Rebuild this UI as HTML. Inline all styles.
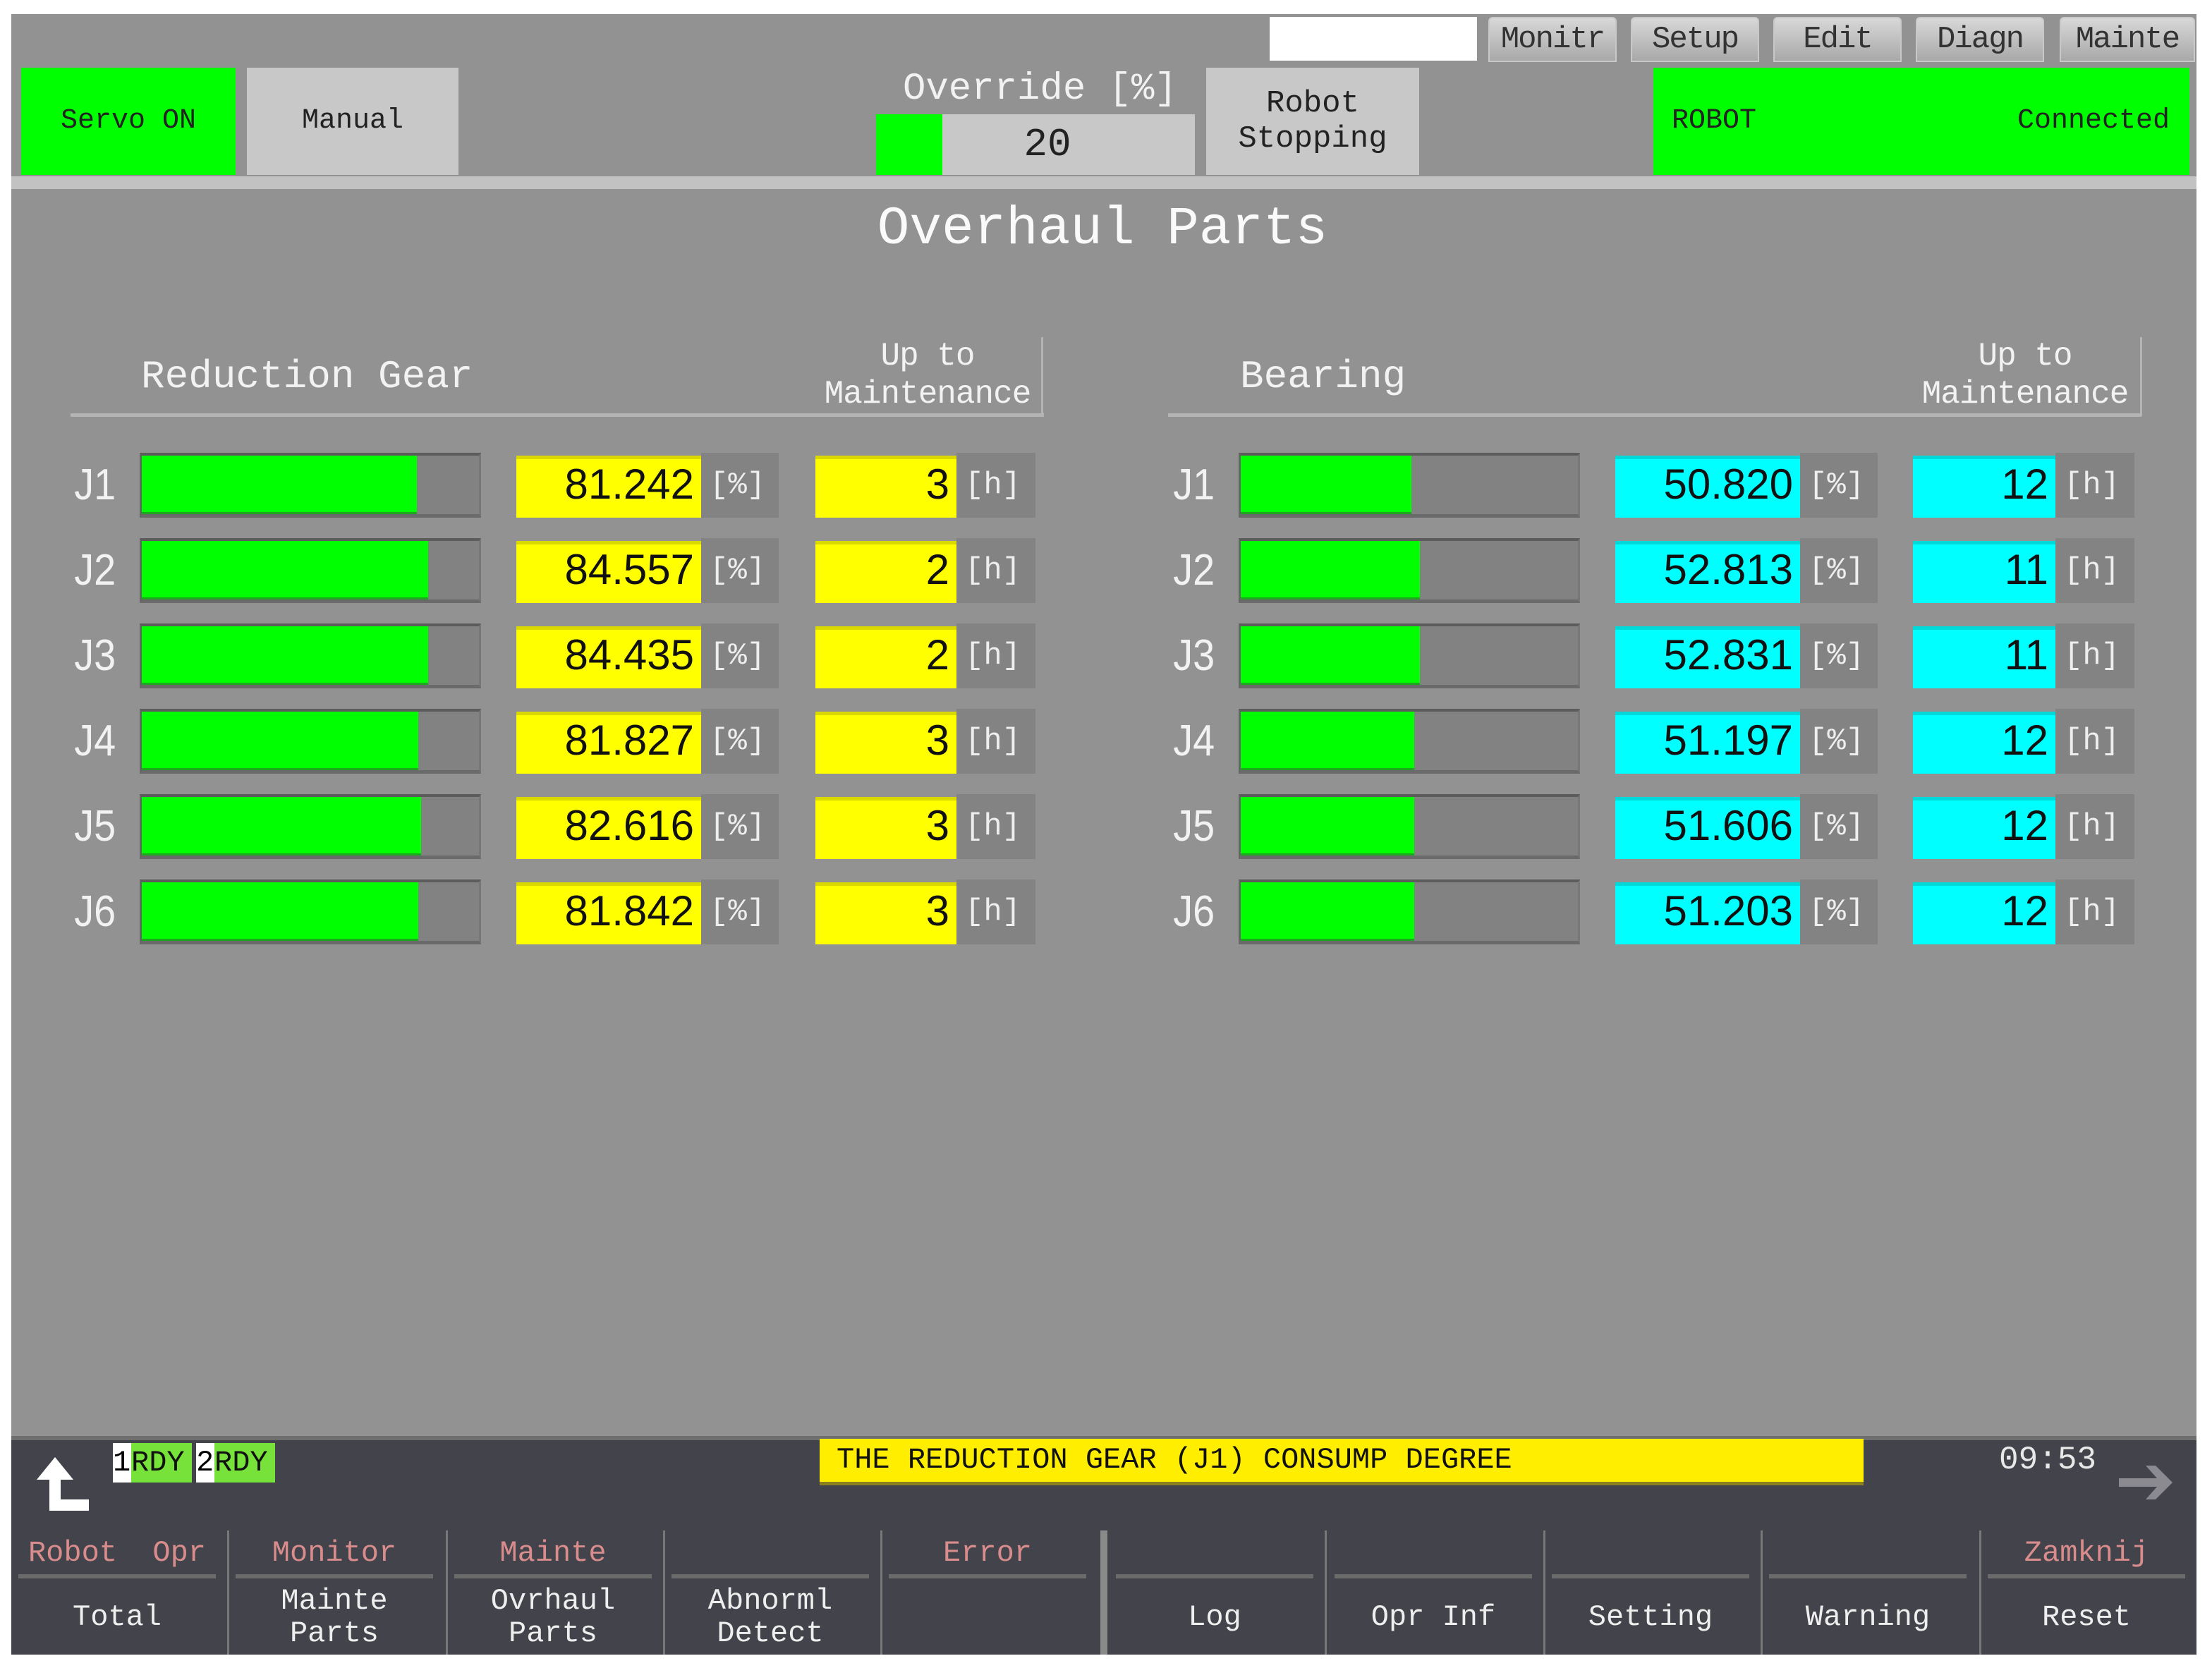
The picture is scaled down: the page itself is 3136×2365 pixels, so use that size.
<!DOCTYPE html>
<html><head><meta charset="utf-8"><style>
*{margin:0;padding:0;box-sizing:border-box}
body{width:3136px;height:2365px;background:#fff;position:relative;overflow:hidden;font-family:"Liberation Mono",monospace}
.a{position:absolute}
.scr{left:16px;top:20px;width:3098px;height:2326px;background:#929292}
.tab{top:24px;height:64px;background:linear-gradient(#d8d8d8,#a8a8a8);border:2px solid #c8c8c8;border-radius:6px 6px 0 0;color:#333;font-size:44px;text-align:center;line-height:60px;letter-spacing:-2px}
.btn{top:96px;height:152px;display:flex;align-items:center;justify-content:center;font-size:40px;color:#222;text-align:center;line-height:48px}
.row{position:absolute;left:0;width:3136px;height:92px}
.j{position:absolute;top:4px;font-family:"Liberation Sans",sans-serif;font-size:62px;color:#f2f2f2;line-height:84px;transform:scaleX(.9)}
.bar{position:absolute;top:0;width:484px;height:92px;background:#828282;border-top:4px solid #5c5c5c;border-bottom:5px solid #6a6a6a;border-left:3px solid #666;border-right:3px solid #777}
.bar i{position:absolute;left:0;top:0;bottom:0;background:#00ff00;border-bottom:3px solid #1ca81c}
.v{position:absolute;top:4px;height:88px;text-align:right;padding-right:10px;font-family:"Liberation Sans",sans-serif;font-size:60px;line-height:72px;color:#111;border-top:5px solid rgba(0,0,0,.15)}
.y{background:#ffff00}.c{background:#00ffff}
.u{position:absolute;top:0;height:92px;background:#838383;color:#eee;font-size:44px;line-height:92px;padding-left:12px}
.hd{color:#f2f2f2;font-size:56px}
.sm{color:#f2f2f2;font-size:46px;text-align:center;line-height:54px;letter-spacing:-1px}
.fk{position:absolute;top:2160px;height:186px;width:300px;text-align:center}
.fk .t{position:absolute;top:18px;width:100%;color:#d88c8c;font-size:42px}
.fk .l{position:absolute;top:72px;left:10px;right:10px;height:6px;background:#6a6a6a}
.fk .b{position:absolute;top:88px;width:100%;color:#eee;font-size:42px;line-height:46px;height:90px;display:flex;align-items:center;justify-content:center}
.sep{position:absolute;top:2170px;width:3px;height:176px;background:#777}
</style></head><body>
<div class="a scr"></div>
<div class="a" style="left:1800px;top:24px;width:294px;height:62px;background:#fff"></div>
<div class="a tab" style="left:2110px;width:182px">Monitr</div>
<div class="a tab" style="left:2312px;width:182px">Setup</div>
<div class="a tab" style="left:2514px;width:182px">Edit</div>
<div class="a tab" style="left:2716px;width:182px">Diagn</div>
<div class="a tab" style="left:2920px;width:192px">Mainte</div>

<div class="a btn" style="left:30px;width:304px;background:#00ff00">Servo ON</div>
<div class="a btn" style="left:350px;width:300px;background:#c8c8c8">Manual</div>
<div class="a" style="left:1280px;top:96px;color:#f2f2f2;font-size:54px">Override [%]</div>
<div class="a" style="left:1242px;top:162px;width:94px;height:86px;background:#00ff00"></div>
<div class="a btn" style="left:1336px;top:162px;width:358px;height:86px;background:#c8c8c8;font-size:56px;padding-right:60px">20</div>
<div class="a btn" style="left:1710px;width:302px;background:#c8c8c8;font-size:44px;line-height:50px">Robot<br>Stopping</div>
<div class="a btn" style="left:2344px;width:760px;background:#00ff00;justify-content:space-between;padding:0 28px 0 26px"><span>ROBOT</span><span>Connected</span></div>
<div class="a" style="left:16px;top:250px;width:3098px;height:18px;background:#c2c2c2"></div>

<div class="a" style="left:0;width:3136px;top:270px;text-align:center;color:#fafafa;font-size:76px;line-height:110px;padding-right:10px">Overhaul Parts</div>

<div class="a hd" style="left:200px;top:502px">Reduction Gear</div>
<div class="a sm" style="left:1150px;top:478px;width:330px">Up to<br>Maintenance</div>
<div class="a" style="left:100px;top:586px;width:1380px;height:5px;background:#b4b4b4"></div>
<div class="a" style="left:1476px;top:478px;width:3px;height:112px;background:#b4b4b4"></div>
<div class="a hd" style="left:1758px;top:502px">Bearing</div>
<div class="a sm" style="left:2706px;top:478px;width:330px">Up to<br>Maintenance</div>
<div class="a" style="left:1656px;top:586px;width:1380px;height:5px;background:#b4b4b4"></div>
<div class="a" style="left:3034px;top:478px;width:3px;height:112px;background:#b4b4b4"></div>

<div class="row" style="top:642px">
<div class="j" style="left:102px">J1</div><div class="bar" style="left:198px"><i style="width:390px"></i></div>
<div class="v y" style="left:732px;width:262px">81.242</div><div class="u" style="left:994px;width:110px">[%]</div>
<div class="v y" style="left:1156px;width:200px">3</div><div class="u" style="left:1356px;width:112px">[h]</div>
<div class="j" style="left:1660px">J1</div><div class="bar" style="left:1756px"><i style="width:242px"></i></div>
<div class="v c" style="left:2290px;width:262px">50.820</div><div class="u" style="left:2552px;width:110px">[%]</div>
<div class="v c" style="left:2712px;width:202px">12</div><div class="u" style="left:2914px;width:112px">[h]</div>
</div>
<div class="row" style="top:763px">
<div class="j" style="left:102px">J2</div><div class="bar" style="left:198px"><i style="width:406px"></i></div>
<div class="v y" style="left:732px;width:262px">84.557</div><div class="u" style="left:994px;width:110px">[%]</div>
<div class="v y" style="left:1156px;width:200px">2</div><div class="u" style="left:1356px;width:112px">[h]</div>
<div class="j" style="left:1660px">J2</div><div class="bar" style="left:1756px"><i style="width:254px"></i></div>
<div class="v c" style="left:2290px;width:262px">52.813</div><div class="u" style="left:2552px;width:110px">[%]</div>
<div class="v c" style="left:2712px;width:202px">11</div><div class="u" style="left:2914px;width:112px">[h]</div>
</div>
<div class="row" style="top:884px">
<div class="j" style="left:102px">J3</div><div class="bar" style="left:198px"><i style="width:406px"></i></div>
<div class="v y" style="left:732px;width:262px">84.435</div><div class="u" style="left:994px;width:110px">[%]</div>
<div class="v y" style="left:1156px;width:200px">2</div><div class="u" style="left:1356px;width:112px">[h]</div>
<div class="j" style="left:1660px">J3</div><div class="bar" style="left:1756px"><i style="width:254px"></i></div>
<div class="v c" style="left:2290px;width:262px">52.831</div><div class="u" style="left:2552px;width:110px">[%]</div>
<div class="v c" style="left:2712px;width:202px">11</div><div class="u" style="left:2914px;width:112px">[h]</div>
</div>
<div class="row" style="top:1005px">
<div class="j" style="left:102px">J4</div><div class="bar" style="left:198px"><i style="width:392px"></i></div>
<div class="v y" style="left:732px;width:262px">81.827</div><div class="u" style="left:994px;width:110px">[%]</div>
<div class="v y" style="left:1156px;width:200px">3</div><div class="u" style="left:1356px;width:112px">[h]</div>
<div class="j" style="left:1660px">J4</div><div class="bar" style="left:1756px"><i style="width:246px"></i></div>
<div class="v c" style="left:2290px;width:262px">51.197</div><div class="u" style="left:2552px;width:110px">[%]</div>
<div class="v c" style="left:2712px;width:202px">12</div><div class="u" style="left:2914px;width:112px">[h]</div>
</div>
<div class="row" style="top:1126px">
<div class="j" style="left:102px">J5</div><div class="bar" style="left:198px"><i style="width:396px"></i></div>
<div class="v y" style="left:732px;width:262px">82.616</div><div class="u" style="left:994px;width:110px">[%]</div>
<div class="v y" style="left:1156px;width:200px">3</div><div class="u" style="left:1356px;width:112px">[h]</div>
<div class="j" style="left:1660px">J5</div><div class="bar" style="left:1756px"><i style="width:246px"></i></div>
<div class="v c" style="left:2290px;width:262px">51.606</div><div class="u" style="left:2552px;width:110px">[%]</div>
<div class="v c" style="left:2712px;width:202px">12</div><div class="u" style="left:2914px;width:112px">[h]</div>
</div>
<div class="row" style="top:1247px">
<div class="j" style="left:102px">J6</div><div class="bar" style="left:198px"><i style="width:392px"></i></div>
<div class="v y" style="left:732px;width:262px">81.842</div><div class="u" style="left:994px;width:110px">[%]</div>
<div class="v y" style="left:1156px;width:200px">3</div><div class="u" style="left:1356px;width:112px">[h]</div>
<div class="j" style="left:1660px">J6</div><div class="bar" style="left:1756px"><i style="width:246px"></i></div>
<div class="v c" style="left:2290px;width:262px">51.203</div><div class="u" style="left:2552px;width:110px">[%]</div>
<div class="v c" style="left:2712px;width:202px">12</div><div class="u" style="left:2914px;width:112px">[h]</div>
</div>

<div class="a" style="left:16px;top:2036px;width:3098px;height:310px;background:#43434b;border-top:6px solid #6e6e6e"></div>
<svg class="a" style="left:48px;top:2064px" width="82" height="82" viewBox="0 0 82 82"><path d="M30 2 L4 34 L22 34 L22 78 L78 78 L78 62 L38 62 L38 34 L56 34 Z" fill="#fff"/></svg>
<div class="a" style="left:160px;top:2046px;height:56px;width:230px;display:flex;font-size:42px;line-height:56px">
<span style="background:#fff;color:#000;width:26px">1</span><span style="background:#77e33a;color:#111;width:86px">RDY</span><span style="width:6px"></span><span style="background:#fff;color:#000;width:26px">2</span><span style="background:#77e33a;color:#111;width:86px">RDY</span></div>
<div class="a" style="left:1162px;top:2040px;width:1480px;height:66px;background:#ffee00;border-bottom:5px solid #8a8020;color:#111;font-size:42px;line-height:60px;padding-left:24px">THE REDUCTION GEAR (J1) CONSUMP DEGREE</div>
<div class="a" style="left:2834px;top:2044px;color:#e8e8e8;font-size:46px">09:53</div>
<svg class="a" style="left:3000px;top:2072px" width="86" height="60" viewBox="0 0 86 60"><path d="M4 24 H58 L42 6 H56 L80 30 L56 54 H42 L58 36 H4 Z" fill="#8a8a90"/></svg>

<div class="fk" style="left:16px"><div class="t">Robot&nbsp;&nbsp;Opr</div><div class="l"></div><div class="b">Total</div></div>
<div class="fk" style="left:324px"><div class="t">Monitor</div><div class="l"></div><div class="b">Mainte<br>Parts</div></div>
<div class="fk" style="left:634px"><div class="t">Mainte</div><div class="l"></div><div class="b">Ovrhaul<br>Parts</div></div>
<div class="fk" style="left:942px"><div class="t"></div><div class="l"></div><div class="b">Abnorml<br>Detect</div></div>
<div class="fk" style="left:1250px"><div class="t">Error</div><div class="l"></div><div class="b"></div></div>
<div class="fk" style="left:1572px"><div class="t"></div><div class="l"></div><div class="b">Log</div></div>
<div class="fk" style="left:1882px"><div class="t"></div><div class="l"></div><div class="b">Opr Inf</div></div>
<div class="fk" style="left:2190px"><div class="t"></div><div class="l"></div><div class="b">Setting</div></div>
<div class="fk" style="left:2498px"><div class="t"></div><div class="l"></div><div class="b">Warning</div></div>
<div class="fk" style="left:2808px"><div class="t">Zamknij</div><div class="l"></div><div class="b">Reset</div></div>
<div class="sep" style="left:322px"></div><div class="sep" style="left:632px"></div><div class="sep" style="left:940px"></div><div class="sep" style="left:1248px"></div>
<div class="sep" style="left:1560px;width:10px;top:2170px;background:#8a8a8a"></div>
<div class="sep" style="left:1878px"></div><div class="sep" style="left:2188px"></div><div class="sep" style="left:2496px"></div><div class="sep" style="left:2806px"></div>
</body></html>
